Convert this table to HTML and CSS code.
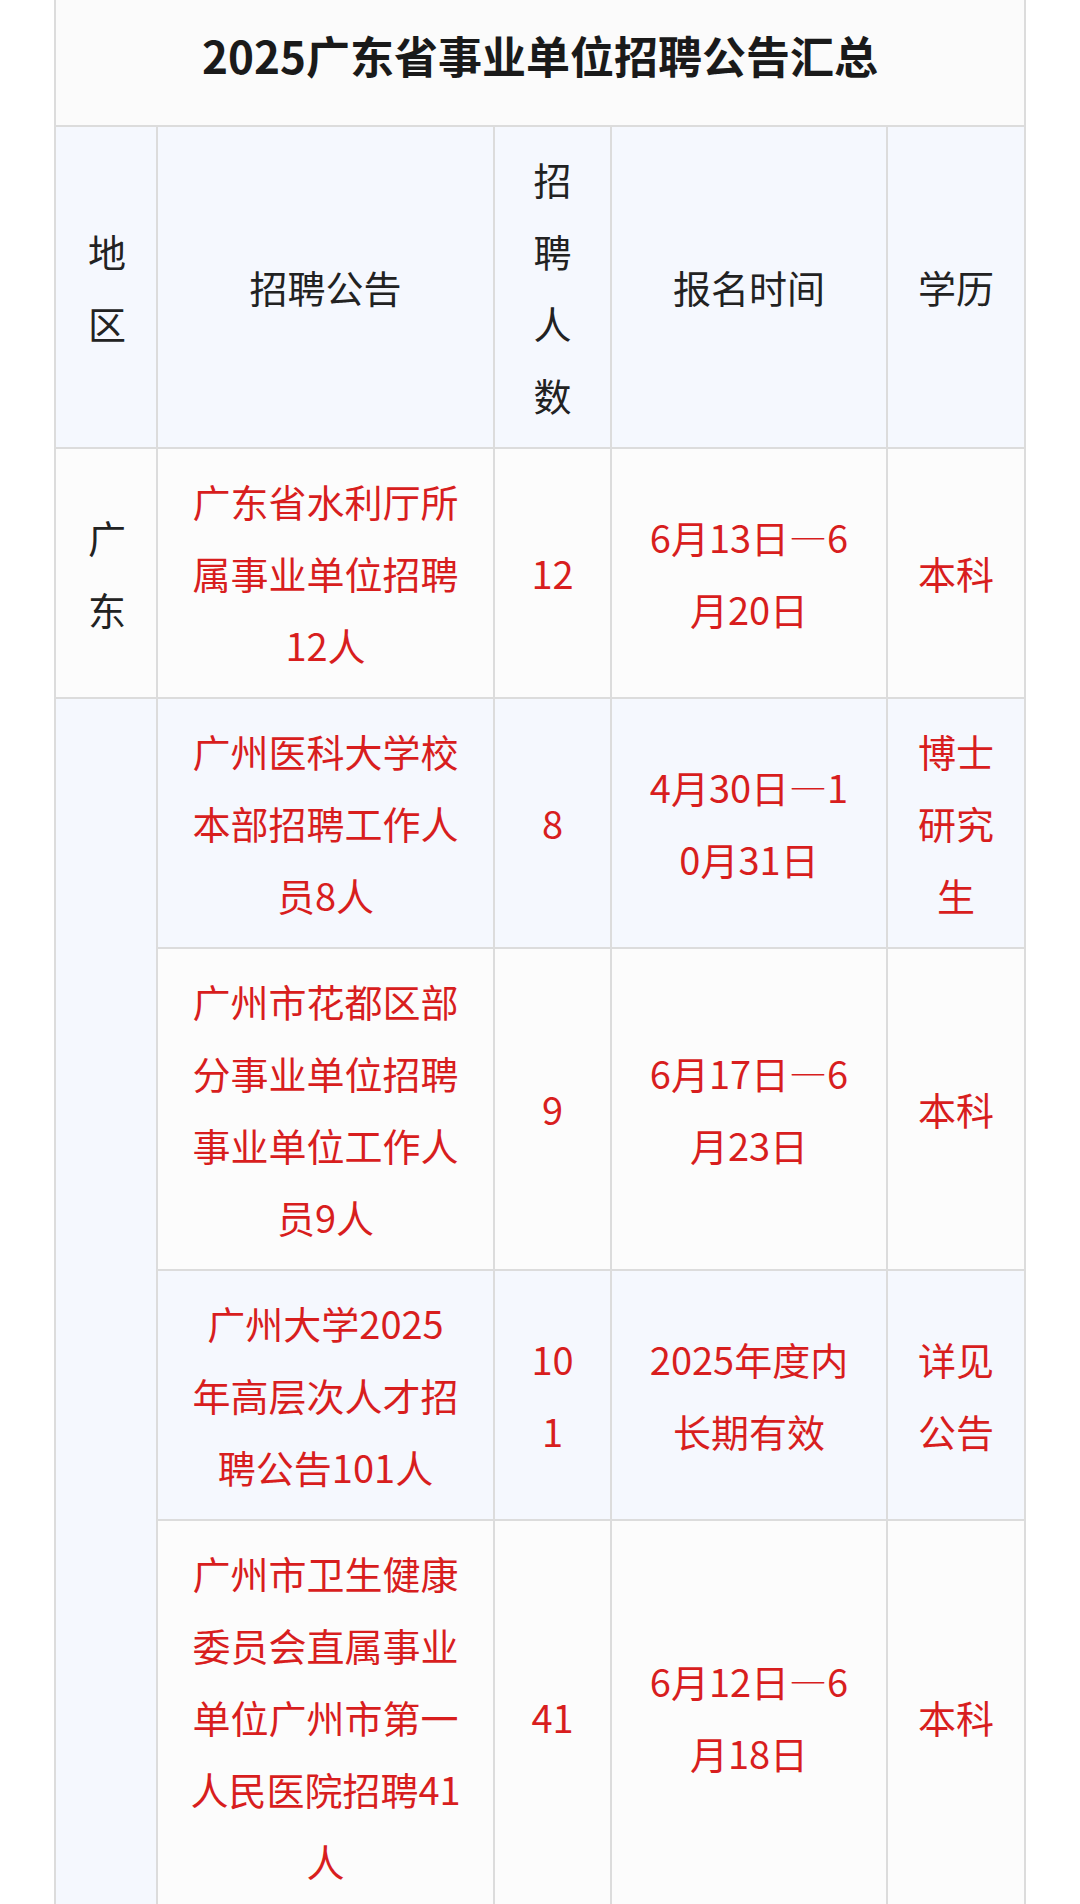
FILE: index.html
```html
<!DOCTYPE html>
<html lang="zh-CN">
<head>
<meta charset="utf-8">
<title>2025广东省事业单位招聘公告汇总</title>
<link rel="stylesheet" href="styles.css">
</head>
<body>
<table class="recruit">
  <colgroup>
    <col class="c-region">
    <col class="c-notice">
    <col class="c-count">
    <col class="c-date">
    <col class="c-edu">
  </colgroup>
  <thead>
    <tr class="title-row">
      <th colspan="5" class="title">2025广东省事业单位招聘公告汇总</th>
    </tr>
    <tr class="head-row">
      <th>地区</th>
      <th>招聘公告</th>
      <th>招聘人数</th>
      <th>报名时间</th>
      <th class="edu">学历</th>
    </tr>
  </thead>
  <tbody>
    <tr class="odd">
      <td class="region">广东</td>
      <td class="red">广东省水利厅所属事业单位招聘12人</td>
      <td class="red">12</td>
      <td class="red">6月13日—6月20日</td>
      <td class="red edu">本科</td>
    </tr>
    <tr class="even">
      <td class="region" rowspan="4"></td>
      <td class="red">广州医科大学校本部招聘工作人员8人</td>
      <td class="red">8</td>
      <td class="red">4月30日—10月31日</td>
      <td class="red edu">博士研究生</td>
    </tr>
    <tr class="odd">
      <td class="red">广州市花都区部分事业单位招聘事业单位工作人员9人</td>
      <td class="red">9</td>
      <td class="red">6月17日—6月23日</td>
      <td class="red edu">本科</td>
    </tr>
    <tr class="even">
      <td class="red">广州大学2025年高层次人才招聘公告101人</td>
      <td class="red">101</td>
      <td class="red">2025年度内长期有效</td>
      <td class="red edu">详见公告</td>
    </tr>
    <tr class="odd">
      <td class="red">广州市卫生健康委员会直属事业单位广州市第一人民医院招聘41人</td>
      <td class="red">41</td>
      <td class="red">6月12日—6月18日</td>
      <td class="red edu">本科</td>
    </tr>
  </tbody>
</table>
</body>
</html>
```

FILE: styles.css
```css
html, body {
  margin: 0;
  padding: 0;
  background: #ffffff;
}

body {
  font-family: "Noto Sans CJK SC", "Noto Sans", sans-serif;
  color: #222222;
}

.recruit {
  margin: 0 0 0 54px;
  width: 972px;
  table-layout: fixed;
  border-collapse: collapse;
  font-size: 38px;
  line-height: 72px;
}

.c-region { width: 102px; }
.c-notice { width: 337px; }
.c-count  { width: 117px; }
.c-date   { width: 276px; }
.c-edu    { width: 138px; }

.recruit th,
.recruit td {
  border: 2px solid #dcdcdc;
  padding: 16px 32px;
  text-align: center;
  vertical-align: middle;
  word-break: break-all;
  font-weight: normal;
}

.recruit .edu {
  padding-left: 28px;
  padding-right: 28px;
}

.title-row .title {
  border-top: hidden;
  background: #fbfbfb;
  font-size: 44px;
  font-weight: bold;
  color: #1a1a1a;
  padding-top: 19px;
  padding-bottom: 34px;
  line-height: 72px;
}

.head-row th {
  background: #f5f8fe;
  color: #222222;
}

.odd td {
  background: #fcfcfc;
}

.even td {
  background: #f5f8fe;
}

.region {
  color: #222222;
}

.red {
  color: #d81e1e;
}
```
